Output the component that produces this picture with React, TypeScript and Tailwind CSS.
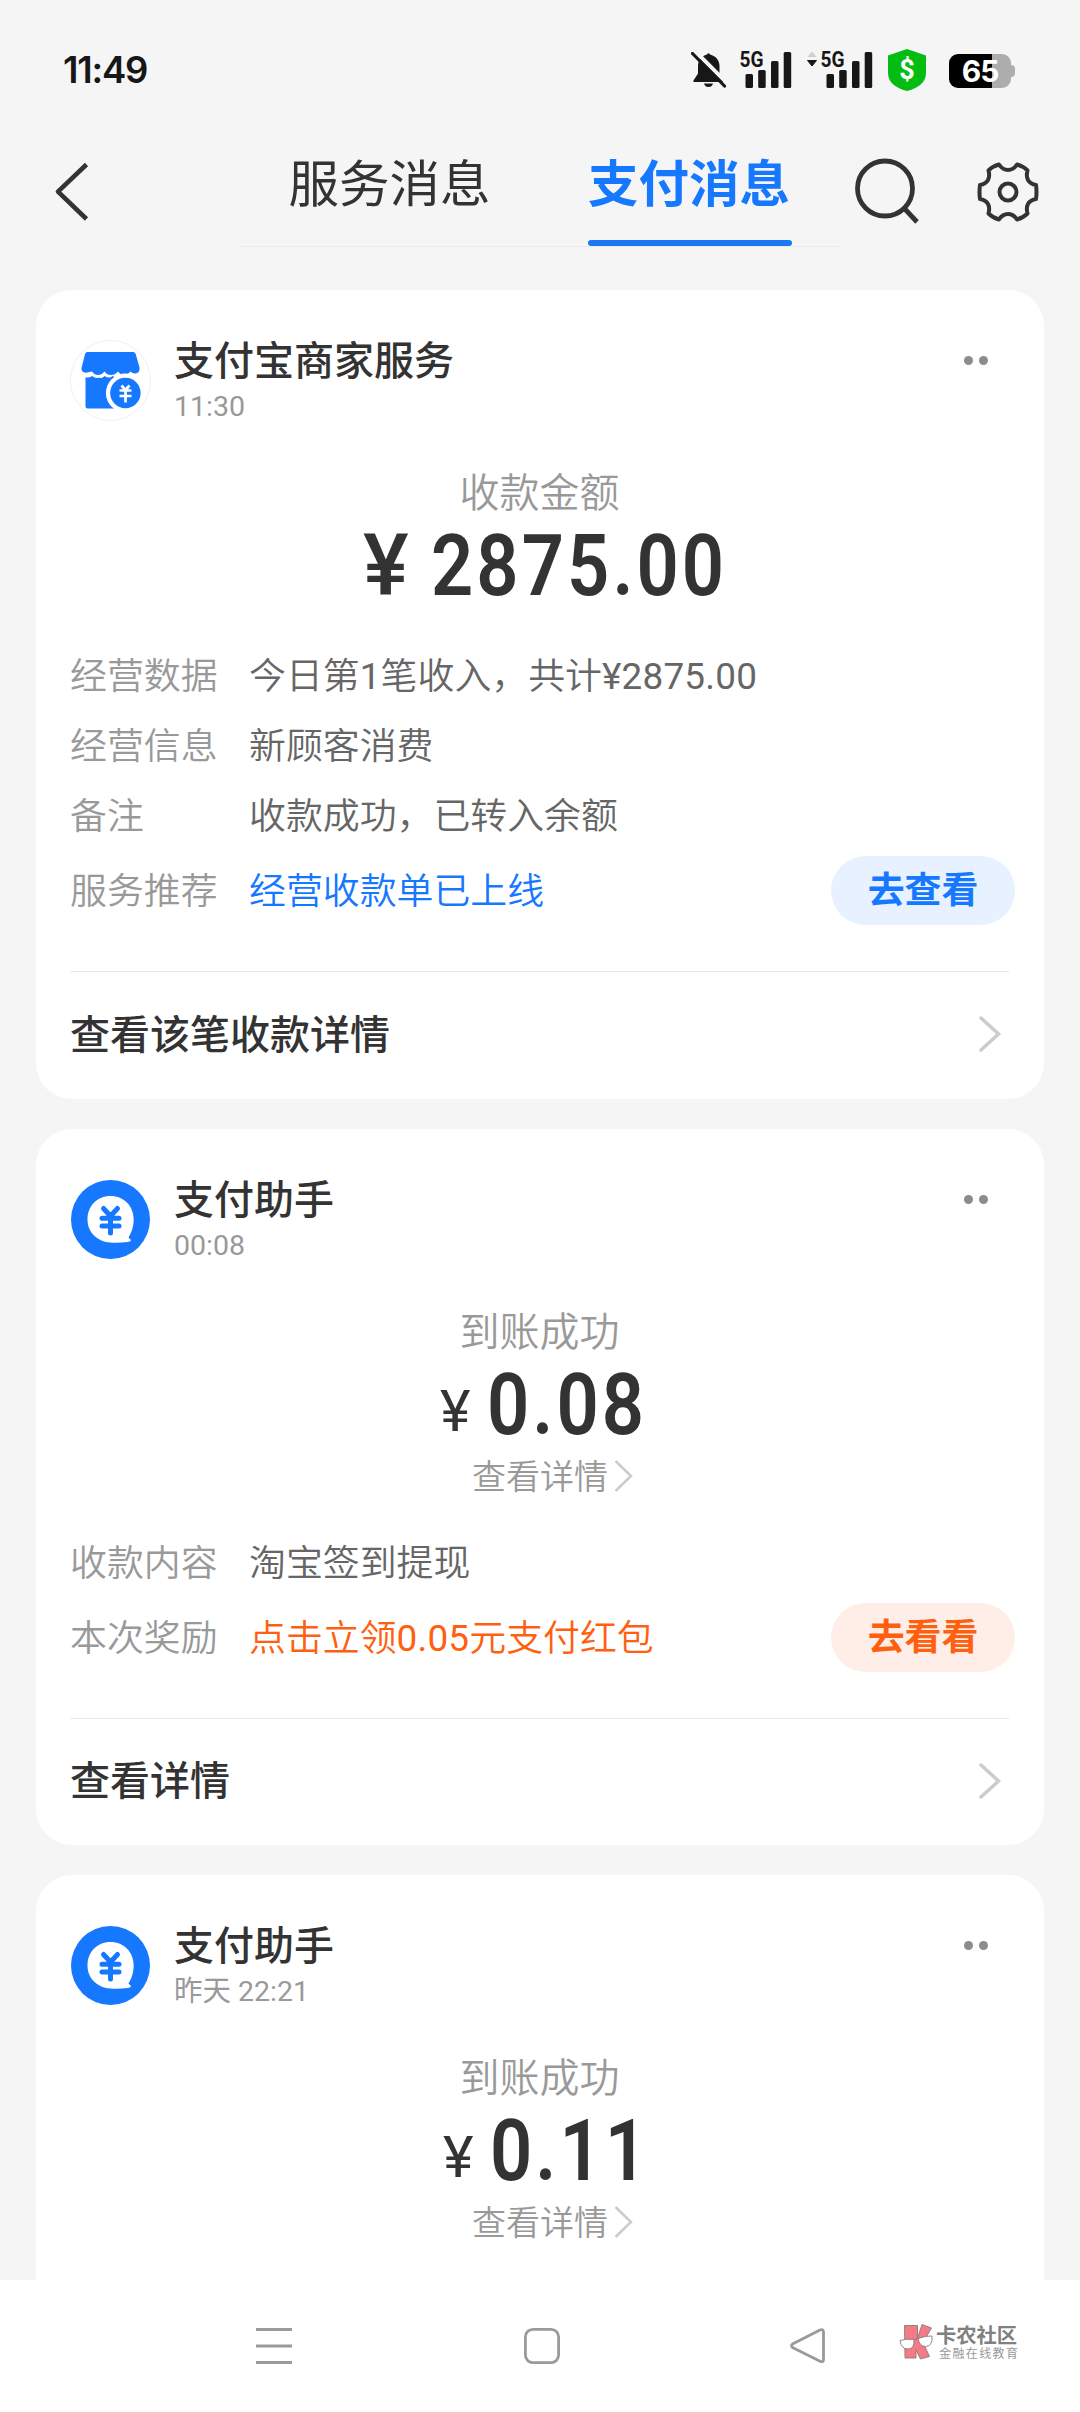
import React from "react";

const BellOff = () => (
  <svg width="36" height="36" viewBox="0 0 36 36" className="ml-[691px] mt-[52px] shrink-0">
    <path d="M16 2.500q1.500-2.500 3 0C25 4 28.500 8.500 28.500 14v7.500l4.500 7V30H2.500v-1.500l4.500-7V14C7 8.500 10 4 16 2.500z" fill="#171717" />
    <path d="M13 31.500h9q-1 3.500-4.500 3.500T13 31.500z" fill="#171717" />
    <path d="M4-1L38 33" stroke="#f5f5f5" strokeWidth="4" />
    <path d="M1.500 1.500L33.500 34" stroke="#171717" strokeWidth="3.200" strokeLinecap="round" />
  </svg>
);

const Signal = () => (
  <svg width="52" height="40" viewBox="0 0 52 40" className="shrink-0 overflow-visible">
    <text x="-0.500" y="17" textLength="24" lengthAdjust="spacingAndGlyphs" fontFamily="Roboto" fontWeight="700" fontSize="22" fill="#171717">5G</text>
    <g fill="#171717">
      <rect x="5.500" y="24" width="7.500" height="14" rx="1.500" />
      <rect x="18.200" y="20" width="7.500" height="18" rx="1.500" />
      <rect x="31" y="11" width="7.500" height="27" rx="1.500" />
      <rect x="43.700" y="2" width="7.500" height="36" rx="1.500" />
    </g>
  </svg>
);

const StatusBar = () => (
  <div className="flex h-[110px] shrink-0 items-start">
    <div className="mt-[48px] w-0 whitespace-nowrap pl-[63px] font-['Inter'] text-[36.500px] leading-[44px] font-semibold tracking-[-1.200px] text-[#171717]">
      11:49
    </div>
    <div className="flex items-start -ml-[63px]">
      <BellOff />
      <div className="mt-[50px] ml-[13px] flex">
        <Signal />
        <svg width="12" height="20" viewBox="0 0 12 20" className="ml-[14px]">
          <path d="M6 1.500L10.500 7h-9z" fill="#cfcfcf" />
          <path d="M1.500 10.500h9L6 16z" fill="#171717" stroke="#171717" strokeLinejoin="round" />
        </svg>
        <div className="ml-[3px]">
          <Signal />
        </div>
      </div>
      <svg width="40" height="44" viewBox="0 0 40 44" className="mt-[48px] ml-[14px]">
        <path d="M20 1L39 7.500V25Q39 38 20 43Q1 38 1 25V7.500z" fill="#04bd13" />
        <text x="20" y="31" textAnchor="middle" fontFamily="Roboto" fontWeight="700" fontSize="27" fill="#fff">$</text>
      </svg>
      <div className="mt-[54px] ml-[22px] flex items-center">
        <div className="flex h-[34px] w-[62px] items-center justify-center rounded-[9px] bg-[linear-gradient(90deg,#000_43px,#adadad_43px)]">
          <span className="font-['Inter'] text-[30px] font-bold tracking-[-1px] text-white">65</span>
        </div>
        <div className="h-[12px] w-[4px] rounded-r-[4px] bg-[#adadad]" />
      </div>
    </div>
  </div>
);

const TitleBar = () => (
  <div className="flex h-[180px] shrink-0 items-start">
    <svg width="36" height="60" viewBox="0 0 36 60" className="mt-[52px] ml-[54px]" fill="none" stroke="#333" strokeWidth="4.600">
      <path d="M32.500 2.500L4 29.700L32.500 57" strokeLinejoin="round" />
    </svg>
    <div className="ml-[150px] flex h-[137px] w-[600px] border-b border-[#ebebeb] text-[50.500px] leading-[60px]">
      <div className="w-[299px] pt-[45px] text-center text-[#333]">服务消息</div>
      <div className="flex w-[300px] flex-col items-center">
        <div className="pt-[45px] font-bold text-[#1677ff]">支付消息</div>
        <div className="mt-[25px] ml-[2px] h-[6px] w-[204px] shrink-0 rounded-full bg-[#1a78f5]" />
      </div>
    </div>
    <svg width="66" height="68" viewBox="0 0 66 68" className="mt-[47px] ml-[14px]" fill="none" stroke="#333" strokeWidth="4.800">
      <circle cx="31" cy="31.500" r="27.500" />
      <path d="M50 51L63 65" />
    </svg>
    <svg width="62" height="62" viewBox="-31 -31 62 62" className="mt-[51px] ml-[57px]" fill="none" stroke="#333" strokeWidth="4">
      <path strokeLinejoin="round" d="M-9-27.500C-6-23-3-22 0-22S6-23 9-27.500Q15-26 19.500-21.500C17.500-14 20-8.500 28-7Q29 0 28 7C20 8.500 17.500 14 19.500 21.500Q15 26 9 27.500C6 23 3 22 0 22S-6 23-9 27.500Q-15 26-19.500 21.500C-17.500 14-20 8.500-28 7Q-29 0-28-7C-20-8.500-17.500-14-19.500-21.500Q-15-26-9-27.500Z" />
      <circle r="8.500" />
    </svg>
  </div>
);

const ShopIcon = () => (
  <svg width="81" height="81" viewBox="0 0 81 81">
    <circle cx="40.500" cy="40.500" r="40" fill="#fff" stroke="#f0f0f0" />
    <path d="M17.500 12h45.500q2 0 2.700 2L69.500 27.500q.500 5.500-4 6q-3 .300-5-2q-3 3.500-6.500 3.500t-6-3.500q-3 3.500-7 3.500t-6.500-3.500q-3 3.500-6.500 3.500t-6-3.500Q11 35 11.500 28L15 14q.700-2 2.500-2z" fill="#1677ff" />
    <path d="M15.500 37.500q4 .500 6.500-1.500q4 3 7 1.500q3 1.500 5.500-1.500q5 3 8 0q5 3 10 0l13 3V68.500H17.500q-2 0-2-2z" fill="#1677ff" />
    <circle cx="55.400" cy="53" r="19.500" fill="#fff" />
    <circle cx="55.400" cy="53" r="15.200" fill="#1677ff" />
    <path d="M51.500 45.500l4 4.500l4-4.500M49.500 50.500h12M49.500 56h12M55.500 50v12.500" stroke="#fff" strokeWidth="2.700" fill="none" />
  </svg>
);

const PayIcon = () => (
  <svg width="81" height="80" viewBox="0 0 81 80" className="mt-px">
    <circle cx="40.500" cy="39.500" r="39.500" fill="#1677ff" />
    <path d="M40.500 16C54 16 63.700 26 63.700 39.500Q63.700 49 58.500 57.500L61 60Q61 61.500 58 62Q50 63 43 62.700C28 62.500 17.500 53 17.500 39.500C17.500 26 27 16 40.500 16z" fill="#fff" />
    <path d="M33.500 28.500l7 7.500l7-7.500M32 38.200h17M32 46h17M40.500 37v16" stroke="#1677ff" strokeWidth="5" strokeLinecap="round" strokeLinejoin="round" fill="none" />
  </svg>
);

// Chinese text is set light; the Latin figures inside it keep the regular weight.
const Mixed = ({ text }: { text: string }) => (
  <>
    {text.split(/([¥\d.]+)/).map((part, i) =>
      i % 2 ? (
        <span key={i} className="font-normal tracking-[0.200px]">
          {part}
        </span>
      ) : (
        part
      ),
    )}
  </>
);

type Row = { label: string; value: string };

type CardProps = {
  className: string;
  icon: React.ReactNode;
  title: string;
  time: string;
  caption: string;
  amount: string;
  amountClass: string;
  yenClass: string;
  link?: boolean;
  rows?: Row[];
  promo?: Row & { button: string; valueClass: string; buttonClass: string };
  footer?: string;
};

const Card = ({ className, icon, title, time, caption, amount, amountClass, yenClass, link, rows, promo, footer }: CardProps) => (
  <div className={`flex shrink-0 flex-col rounded-[36px] bg-white pt-[50px] pl-[34px] ${className}`}>
    <div className="flex h-[84px] items-start">
      {icon}
      <div className="ml-[23px] flex-1">
        <div className="text-[40px] leading-[44px] font-medium text-[#333]">{title}</div>
        <div className="mt-[5px] text-[28.500px] leading-[36px] text-[#999]">{time}</div>
      </div>
      <div className="mt-[16px] mr-[56px] flex gap-[6px]">
        <span className="size-[9px] rounded-full bg-[#8c8c8c]" />
        <span className="size-[9px] rounded-full bg-[#8c8c8c]" />
      </div>
    </div>
    <div className="mt-[46px] mr-[35px] text-center text-[40px] leading-[48px] font-[350] text-[#999]">{caption}</div>
    <div className={`mt-[12px] flex h-[72px] items-baseline text-[86px] leading-[72px] font-semibold text-[#333] ${amountClass}`}>
      <span className={`shrink-0 ${yenClass}`}>¥</span>
      <span className="origin-left scale-x-[0.86] tracking-[3.600px]">{amount}</span>
    </div>
    {link && (
      <div className="mt-[16px] flex h-[40px] items-center pl-[402px] text-[34px] leading-[40px] font-[350] text-[#999]">
        查看详情
        <svg width="20" height="32" viewBox="0 0 20 32" className="-mt-[2px] ml-[6px]" fill="none" stroke="#ccc" strokeWidth="2.500">
          <path d="M1.500 1L17 16L1.500 31" />
        </svg>
      </div>
    )}
    {rows && promo && (
      <div className={`${link ? "mt-[32px]" : "mt-[40px]"} text-[36.900px] font-[350]`}>
        {rows.map((r) => (
          <div key={r.label} className="flex h-[70px] items-center">
            <div className="w-[179px] text-[#999]">{r.label}</div>
            <div className="text-[#666]">
              <Mixed text={r.value} />
            </div>
          </div>
        ))}
        <div className="mt-[4px] flex h-[69px] items-center">
          <div className="w-[179px] pt-[2px] text-[#999]">{promo.label}</div>
          <div className={`flex-1 pt-[2px] ${promo.valueClass}`}>
            <Mixed text={promo.value} />
          </div>
          <div className={`mr-[29px] flex h-[69px] w-[184px] items-center justify-center rounded-full font-bold ${promo.buttonClass}`}>
            {promo.button}
          </div>
        </div>
      </div>
    )}
    {footer && (
      <>
        <div className="mt-[46px] mr-[35px] h-px shrink-0 bg-[#e8e8e8]" />
        <div className="flex flex-1 items-center justify-between pr-[42px]">
          <div className="text-[40px] font-medium text-[#333]">{footer}</div>
          <svg width="24" height="38" viewBox="0 0 24 38" className="-mt-[3px]" fill="none" stroke="#ccc" strokeWidth="3.500" strokeLinecap="round">
            <path d="M3 3L20.500 19L3 35" />
          </svg>
        </div>
      </>
    )}
  </div>
);

const NavBar = () => (
  <div className="flex h-[132px] shrink-0 items-start bg-white">
    <svg width="36" height="40" viewBox="0 0 36 40" className="mt-[46px] ml-[256px]" stroke="#9a9a9a" strokeWidth="3">
      <path d="M0 3.500h36M0 20h36M0 36.500h36" />
    </svg>
    <svg width="38" height="40" viewBox="0 0 38 40" className="mt-[46px] ml-[231px]" fill="none" stroke="#9a9a9a" strokeWidth="2.800">
      <rect x="2.400" y="3.400" width="33.200" height="33.200" rx="7.500" />
    </svg>
    <svg width="38" height="40" viewBox="0 0 38 40" className="mt-[46px] ml-[228px]" fill="none" stroke="#9a9a9a" strokeWidth="2.800" strokeLinejoin="round">
      <path d="M30.500 4.200Q34.500 2.500 34.500 6V33.500Q34.500 37 30.500 35L3.500 21.500Q1.500 19.700 3.500 18z" />
    </svg>
    <svg width="36" height="37" viewBox="0 0 36 37" className="mt-[44px] ml-[72px]" stroke="#8a7a7a" strokeWidth=".9">
      <path d="M5.500 1.500h13V14L23 .500L32.500 4L24 18.500L30.500 32.500L21.500 35L17 26V34H6z" fill="#f47a85" />
      <path d="M1 16.500Q7 14.500 15 15.500Q15.500 25 9 25Q2 25 1 16.500zM19 14.500Q27 11.500 33 12Q34 22 26.500 22.500Q20.500 22.500 19 14.500z" fill="#fff" />
      <path d="M15 16.500Q17 14 19 15" fill="none" />
    </svg>
    <div className="ml-px flex flex-col pt-[45px]">
      <div className="text-[20.300px] leading-[23px] font-bold text-[#808080]">卡农社区</div>
      <div className="ml-[3px] text-[12px] leading-[13px] tracking-[1.400px] text-[#999]">金融在线教育</div>
    </div>
  </div>
);

export default function App() {
  return (
    <div className="flex h-[2412px] w-[1080px] flex-col overflow-hidden bg-[#f5f5f5] font-['Roboto','Noto_Sans_CJK_SC',sans-serif]">
      <div className="flex h-[2280px] shrink-0 flex-col overflow-hidden">
        <StatusBar />
        <TitleBar />
        <div className="flex flex-col gap-[30px] px-[36px]">
          <Card
            className="h-[809px]"
            icon={<ShopIcon />}
            title="支付宝商家服务"
            time="11:30"
            caption="收款金额"
            amount="2875.00"
            amountClass="pl-[293px]"
            yenClass="w-[68px] font-medium"
            rows={[
              { label: "经营数据", value: "今日第1笔收入，共计¥2875.00" },
              { label: "经营信息", value: "新顾客消费" },
              { label: "备注", value: "收款成功，已转入余额" },
            ]}
            promo={{
              label: "服务推荐",
              value: "经营收款单已上线",
              button: "去查看",
              valueClass: "text-[#1677ff]",
              buttonClass: "bg-[#e7f1ff] text-[#1677ff]",
            }}
            footer="查看该笔收款详情"
          />
          <Card
            className="h-[716px]"
            icon={<PayIcon />}
            title="支付助手"
            time="00:08"
            caption="到账成功"
            amount="0.08"
            amountClass="pl-[370px]"
            yenClass="relative -top-[3px] w-[47px] text-[58px] font-normal"
            link
            rows={[{ label: "收款内容", value: "淘宝签到提现" }]}
            promo={{
              label: "本次奖励",
              value: "点击立领0.05元支付红包",
              button: "去看看",
              valueClass: "text-[#ff6010]",
              buttonClass: "bg-[#ffeee7] text-[#ff6010]",
            }}
            footer="查看详情"
          />
          <Card
            className="h-[716px]"
            icon={<PayIcon />}
            title="支付助手"
            time="昨天 22:21"
            caption="到账成功"
            amount="0.11"
            amountClass="pl-[373px]"
            yenClass="relative -top-[3px] w-[47px] text-[58px] font-normal"
            link
          />
        </div>
      </div>
      <NavBar />
    </div>
  );
}
